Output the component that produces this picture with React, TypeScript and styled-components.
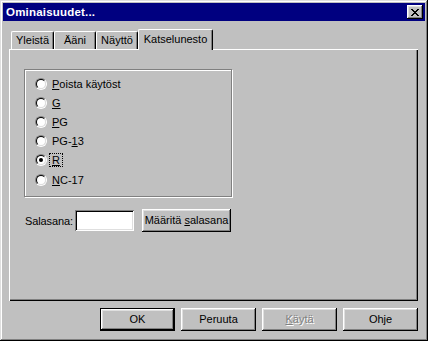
import React from "react";
import styled, { createGlobalStyle, css } from "styled-components";

const GlobalStyle = createGlobalStyle`
  html, body { margin: 0; padding: 0; background: #c0c0c0; }
  body {
    font-family: "Liberation Sans", Arial, sans-serif;
    font-size: 11px;
    color: #000;
  }
  * { box-sizing: border-box; }
`;

const Window = styled.div`
  width: 428px;
  height: 341px;
  background: #c0c0c0;
  padding: 3px;
  display: flex;
  flex-direction: column;
  box-shadow: inset -1px -1px #000, inset 1px 1px #dfdfdf,
    inset -2px -2px #808080, inset 2px 2px #fff;
`;

const TitleBar = styled.div`
  height: 18px;
  background: #000080;
  display: flex;
  align-items: center;
  justify-content: space-between;
  padding: 0 2px 0 3px;
`;

const TitleText = styled.span`
  color: #fff;
  font-weight: bold;
  font-size: 11.5px;
  letter-spacing: 0.2px;
  line-height: 18px;
`;

const bevel = css`
  background: #c0c0c0;
  border: none;
  box-shadow: inset -1px -1px #000, inset 1px 1px #fff,
    inset -2px -2px #808080, inset 2px 2px #dfdfdf;
`;

const CloseButton = styled.div`
  ${bevel};
  width: 16px;
  height: 14px;
  display: flex;
  align-items: center;
  justify-content: center;
  padding-right: 1px;
`;

const Body = styled.div`
  flex: 1;
  display: flex;
  flex-direction: column;
  padding: 8px 7px 0 6px;
`;

const TabRow = styled.div`
  display: flex;
  align-items: flex-end;
  height: 20px;
  padding-left: 2px;
`;

const Tab = styled.div<{ $w: number; $active?: boolean }>`
  width: ${(p) => p.$w}px;
  height: ${(p) => (p.$active ? 21 : 18)}px;
  margin-bottom: ${(p) => (p.$active ? -1 : 0)}px;
  background: #c0c0c0;
  border-left: 1px solid #fff;
  border-top: 1px solid #fff;
  border-right: 1px solid #000;
  border-top-left-radius: 2px;
  border-top-right-radius: 2px;
  box-shadow: inset -1px 0 #808080;
  display: flex;
  align-items: ${(p) => (p.$active ? "flex-start" : "center")};
  padding-top: ${(p) => (p.$active ? 3 : 0)}px;
  justify-content: center;
  position: relative;
  z-index: ${(p) => (p.$active ? 2 : 0)};
  line-height: 13px;
`;

const Panel = styled.div`
  height: 252px;
  box-shadow: inset 1px 1px #fff, inset -1px -1px #000, inset -2px -2px #808080;
  padding: 20px 0 0 15px;
  display: flex;
  flex-direction: column;
`;

const GroupBox = styled.div`
  width: 208px;
  height: 128px;
  border: 1px solid #808080;
  box-shadow: 1px 1px 0 #fff, inset 1px 1px 0 #fff;
  padding: 4px 0 0 10px;
  display: grid;
  grid-auto-rows: 19.2px;
  align-content: start;
`;

const RadioRow = styled.div`
  display: flex;
  align-items: center;
  gap: 3px;
`;

const RadioOuter = styled.span`
  width: 12px;
  height: 12px;
  border-radius: 50%;
  border: 1px solid;
  border-color: #808080 #fff #fff #808080;
  display: inline-flex;
`;

const RadioInner = styled.span`
  flex: 1;
  border-radius: 50%;
  border: 1px solid;
  border-color: #000 #dfdfdf #dfdfdf #000;
  background: #fff;
  display: flex;
  align-items: center;
  justify-content: center;
`;

const Dot = styled.span`
  width: 4px;
  height: 4px;
  border-radius: 50%;
  background: #000;
`;

const RadioLabel = styled.span<{ $focus?: boolean }>`
  padding: 0 2px;
  line-height: 12px;
  outline: ${(p) => (p.$focus ? "1px dotted #000" : "none")};
  outline-offset: 0;
`;

const PasswordRow = styled.div`
  display: flex;
  align-items: center;
  margin-top: 12px;
  padding-left: 1px;
`;

const Label = styled.span`
  margin-right: 2px;
  letter-spacing: -0.1px;
`;

const TextBox = styled.div`
  width: 59px;
  height: 21px;
  background: #fff;
  box-shadow: inset 1px 1px #808080, inset -1px -1px #fff,
    inset 2px 2px #000, inset -2px -2px #dfdfdf;
  margin-right: 8px;
`;

const Button = styled.div<{ $w?: number; $default?: boolean; $disabled?: boolean }>`
  ${bevel};
  width: ${(p) => p.$w ?? 75}px;
  height: 23px;
  display: flex;
  align-items: center;
  justify-content: center;
  padding-bottom: 1px;
  ${(p) =>
    p.$default &&
    css`
      box-shadow: inset 0 0 0 1px #000, inset -2px -2px #000, inset 2px 2px #fff,
        inset -3px -3px #808080, inset 3px 3px #dfdfdf;
    `}
  ${(p) =>
    p.$disabled &&
    css`
      color: #808080;
      text-shadow: 1px 1px 0 #fff;
    `}
`;

const ButtonRow = styled.div`
  display: flex;
  justify-content: flex-end;
  gap: 6px;
  margin-top: 7px;
`;

const CloseGlyph = () => (
  <svg width="8" height="7" viewBox="0 0 8 7" shapeRendering="crispEdges">
    <path
      d="M0 0h2v1H0zM6 0h2v1H6zM1 1h2v1H1zM5 1h2v1H5zM2 2h4v1H2zM3 3h2v1H3zM2 4h4v1H2zM1 5h2v1H1zM5 5h2v1H5zM0 6h2v1H0zM6 6h2v1H6z"
      fill="#000"
    />
  </svg>
);

type Opt = { pre?: string; u: string; post?: string; checked?: boolean };
const options: Opt[] = [
  { u: "P", post: "oista käytöst" },
  { u: "G" },
  { u: "P", post: "G" },
  { pre: "PG-", u: "1", post: "3" },
  { u: "R", checked: true },
  { u: "N", post: "C-17" },
];

export default function App() {
  return (
    <>
      <GlobalStyle />
      <Window>
        <TitleBar>
          <TitleText>Ominaisuudet...</TitleText>
          <CloseButton>
            <CloseGlyph />
          </CloseButton>
        </TitleBar>
        <Body>
          <TabRow>
            <Tab $w={43}>Yleistä</Tab>
            <Tab $w={42}>Ääni</Tab>
            <Tab $w={42}>Näyttö</Tab>
            <Tab $w={75} $active>
              Katselunesto
            </Tab>
          </TabRow>
          <Panel>
            <GroupBox>
              {options.map((o, i) => (
                <RadioRow key={i}>
                  <RadioOuter>
                    <RadioInner>{o.checked && <Dot />}</RadioInner>
                  </RadioOuter>
                  <RadioLabel $focus={o.checked}>
                    {o.pre}
                    <u>{o.u}</u>
                    {o.post}
                  </RadioLabel>
                </RadioRow>
              ))}
            </GroupBox>
            <PasswordRow>
              <Label>Salasana:</Label>
              <TextBox />
              <Button $w={89}>
                Määritä&nbsp;<u>s</u>alasana
              </Button>
            </PasswordRow>
          </Panel>
          <ButtonRow>
            <Button $default>OK</Button>
            <Button>Peruuta</Button>
            <Button $disabled>
              <u>K</u>äytä
            </Button>
            <Button>Ohje</Button>
          </ButtonRow>
        </Body>
      </Window>
    </>
  );
}
